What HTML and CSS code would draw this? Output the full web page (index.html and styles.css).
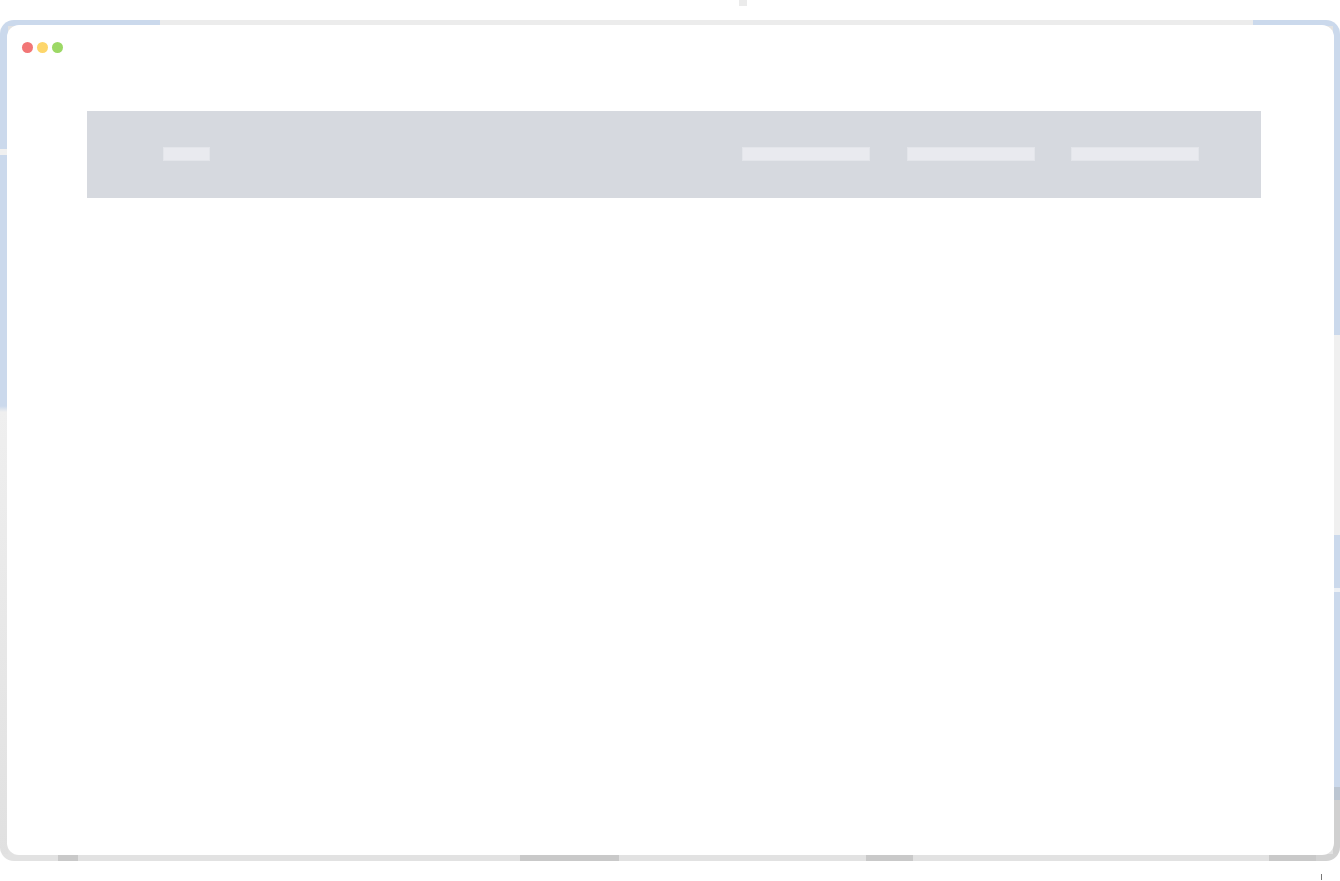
FILE: index.html
```html
<!DOCTYPE html>
<html lang="en">
<head>
    <meta charset="UTF-8">
    <meta name="viewport" content="width=device-width, initial-scale=1.0">
    <title>Browser Mockup</title>
    <link rel="stylesheet" href="styles.css">
</head>
<body>
    <span class="stray stray-top"></span>
    <div class="window">
        <div class="window-inner">
            <div class="window-dots">
                <span class="dot dot-red"></span>
                <span class="dot dot-yellow"></span>
                <span class="dot dot-green"></span>
            </div>
            <div class="site-header">
                <span class="bar bar-logo"></span>
                <nav class="site-nav">
                    <span class="bar"></span>
                    <span class="bar"></span>
                    <span class="bar"></span>
                </nav>
            </div>
        </div>
    </div>
    <span class="stray stray-bottom"></span>
</body>
</html>
```

FILE: styles.css
```css
body, html {
    margin: 0;
    padding: 0;
    background: #fff;
    font-family: "Liberation Sans", Arial, sans-serif;
}

body {
    position: relative;
    height: 881px;
    overflow: hidden;
}

.window {
    margin-top: 20px;
    width: 1340px;
    height: 841px;
    box-sizing: border-box;
    padding: 5px 6px 6px 7px;
    border-radius: 14px;
    background-color: #e2e2e2;
    /* border ring is painted by strips behind the inner white panel */
    background-image:
        linear-gradient(to right, #cbd9ec 0 160px, #ececec 160px 1253px, #cbd9ec 1253px),
        linear-gradient(to right, #e2e2e2 0 58px, #c9c9c9 58px 78px, #e2e2e2 78px 520px, #c9c9c9 520px 619px, #e2e2e2 619px 866px, #c9c9c9 866px 913px, #e2e2e2 913px 1269px, #c9c9c9 1269px 1316px, #d2d2d2 1316px),
        linear-gradient(to bottom, #cbd9ec 0 129px, #f0f0f0 129px 135px, #cbd9ec 135px 386px, #efefef 392px, #e0e0e0 100%),
        linear-gradient(to bottom, #cbd9ec 0 315px, #f0f0f0 315px 515px, #cbd9ec 515px 568px, #eef1f5 568px 572px, #cbd9ec 572px 767px, #bcc6d2 767px 780px, #d0d0d0 780px);
    background-size: 100% 6px, 100% 7px, 8px 100%, 7px 100%;
    background-position: top left, bottom left, top left, top right;
    background-repeat: no-repeat;
}

.window-inner {
    height: 100%;
    background: #fff;
    border-radius: 12px;
    overflow: hidden;
}

.window-dots {
    display: flex;
    gap: 4px;
    padding: 17px 0 0 15px;
}

.dot {
    width: 11px;
    height: 11px;
    border-radius: 50%;
}

.dot-red { background: #f27676; }
.dot-yellow { background: #fdd66b; }
.dot-green { background: #9cd865; }

.site-header {
    display: flex;
    align-items: flex-start;
    justify-content: space-between;
    height: 87px;
    box-sizing: border-box;
    margin: 58px 73px 0 80px;
    padding: 36px 62px 0 76px;
    background: #d6d9df;
}

.site-nav {
    display: flex;
    gap: 36.5px;
}

.bar {
    display: block;
    width: 128px;
    height: 14px;
    background: #e9eaef;
    box-shadow: inset 0 0 0 1px #e3e5ea;
}

.bar-logo {
    width: 47px;
}

.stray {
    position: absolute;
}

.stray-top {
    left: 739px;
    top: 0;
    width: 8px;
    height: 6px;
    background: #ebebeb;
}

.stray-bottom {
    left: 1321px;
    top: 874px;
    width: 1px;
    height: 6px;
    background: #777;
}
```
